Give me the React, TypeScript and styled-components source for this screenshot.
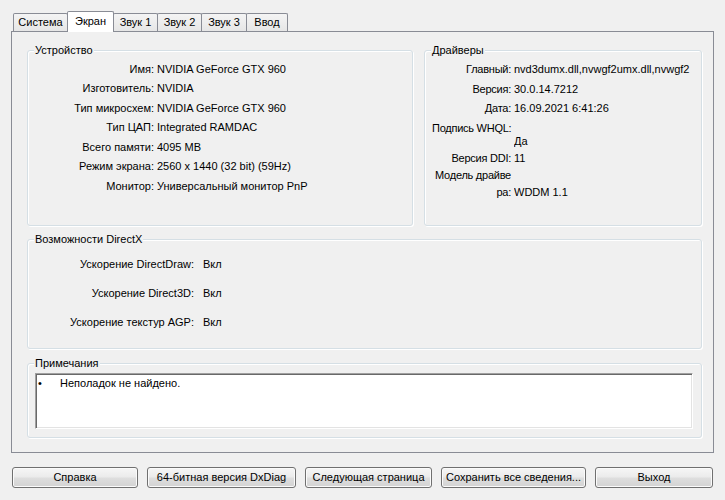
import { Fragment } from "react";
import styled, { createGlobalStyle } from "styled-components";

const GlobalStyle = createGlobalStyle`
  html, body {
    margin: 0;
    padding: 0;
    background: #f0f0f0;
  }
  body {
    font-family: "Liberation Sans", Arial, sans-serif;
    font-size: 11px;
    color: #000;
  }
`;

const Window = styled.div`
  width: 725px;
  height: 500px;
  box-sizing: border-box;
  padding: 11px 11px 0 11px;
  background: #f0f0f0;
`;

const TabStrip = styled.div`
  position: relative;
  z-index: 2;
  display: flex;
  align-items: flex-end;
  height: 20px;
  padding-left: 2px;
`;

const Tab = styled.div<{ $active?: boolean; $w: number }>`
  position: relative;
  z-index: ${(p) => (p.$active ? 2 : 1)};
  box-sizing: border-box;
  width: ${(p) => p.$w}px;
  height: ${(p) => (p.$active ? 21 : 18)}px;
  margin-bottom: ${(p) => (p.$active ? -1 : 0)}px;
  border: 1px solid #898c95;
  border-bottom: none;
  border-radius: 2px 2px 0 0;
  background: ${(p) =>
    p.$active ? "#ffffff" : "linear-gradient(#f4f4f4, #e6e6e6)"};
  display: flex;
  align-items: center;
  justify-content: center;
  padding-bottom: ${(p) => (p.$active ? 2 : 0)}px;
  line-height: 13px;
  white-space: nowrap;

  & + & {
    margin-left: -1px;
  }
`;

const Panel = styled.div`
  position: relative;
  z-index: 1;
  box-sizing: border-box;
  height: 422px;
  border: 1px solid #898c95;
  padding: 18px 11px 14px 15px;
  display: flex;
  flex-direction: column;
`;

const TopRow = styled.div`
  display: grid;
  grid-template-columns: 386px 1fr;
  column-gap: 11px;
  height: 176px;
`;

const GroupBox = styled.section<{ $h?: number; $mt?: number }>`
  position: relative;
  box-sizing: border-box;
  height: ${(p) => (p.$h ? `${p.$h}px` : "100%")};
  margin-top: ${(p) => p.$mt ?? 0}px;
  border: 1px solid #d5dfe5;
  border-radius: 3px;
  box-shadow: inset 1px 1px 0 #ffffff, 1px 1px 0 #ffffff;
`;

const GroupTitle = styled.div`
  position: absolute;
  top: -7px;
  left: 6px;
  padding: 0 1px;
  background: #f0f0f0;
  line-height: 13px;
  white-space: nowrap;
`;

const DeviceGrid = styled.div`
  display: grid;
  grid-template-columns: 126px 1fr;
  column-gap: 3px;
  padding-top: 8.5px;
  line-height: 19.5px;
`;

const Label = styled.div`
  text-align: right;
  white-space: nowrap;
`;

const Value = styled.div`
  white-space: nowrap;
  overflow: hidden;
`;

const DriverList = styled.div`
  padding: 12px 0 0 7px;
  line-height: 13px;
`;

const DriverRow = styled.div<{ $mt: number; $lh?: number }>`
  display: grid;
  grid-template-columns: 79px 1fr;
  column-gap: 3px;
  align-items: end;
  margin-top: ${(p) => p.$mt}px;
  line-height: ${(p) => p.$lh ?? 13}px;
  padding-right: 6px;
`;

const DriverLabel = styled.div`
  text-align: right;
  white-space: nowrap;
  letter-spacing: -0.25px;
`;

const DirectXGrid = styled.div`
  display: grid;
  grid-template-columns: 166px 1fr;
  column-gap: 9px;
  padding-top: 10px;
  line-height: 29px;
`;

const NotesBox = styled.div`
  box-sizing: border-box;
  height: 56px;
  margin: 9px 8px 0 7px;
  background: #ffffff;
  border: 1px solid;
  border-color: #a0a0a0 #ffffff #ffffff #a0a0a0;
  box-shadow: inset 1px 1px 0 #696969, inset -1px -1px 0 #e3e3e3;
  padding: 2.5px 0 0 2px;
  line-height: 13px;
`;

const NoteLine = styled.div`
  display: grid;
  grid-template-columns: 22px 1fr;
`;

const ButtonRow = styled.div`
  display: flex;
  justify-content: space-between;
  margin-top: 14px;
  padding: 0 1px;
`;

const Button = styled.button<{ $w: number }>`
  box-sizing: border-box;
  width: ${(p) => p.$w}px;
  height: 21px;
  padding: 0;
  border: 1px solid #707070;
  border-radius: 3px;
  background: linear-gradient(
    to bottom,
    #f6f6f6 0%,
    #ebebeb 48%,
    #dedede 52%,
    #d3d3d3 100%
  );
  box-shadow: inset 0 0 0 1px #fbfbfb;
  font: inherit;
  line-height: 13px;
  color: #000;
  white-space: nowrap;
`;

const tabs = [
  { name: "Система", w: 55 },
  { name: "Экран", w: 47, active: true },
  { name: "Звук 1", w: 45 },
  { name: "Звук 2", w: 45 },
  { name: "Звук 3", w: 46 },
  { name: "Ввод", w: 42 },
];

const device = [
  ["Имя:", "NVIDIA GeForce GTX 960"],
  ["Изготовитель:", "NVIDIA"],
  ["Тип микросхем:", "NVIDIA GeForce GTX 960"],
  ["Тип ЦАП:", "Integrated RAMDAC"],
  ["Всего памяти:", "4095 MB"],
  ["Режим экрана:", "2560 x 1440 (32 bit) (59Hz)"],
  ["Монитор:", "Универсальный монитор PnP"],
];

const directx = [
  ["Ускорение DirectDraw:", "Вкл"],
  ["Ускорение Direct3D:", "Вкл"],
  ["Ускорение текстур AGP:", "Вкл"],
];

const buttons = [
  { text: "Справка", w: 126 },
  { text: "64-битная версия DxDiag", w: 149 },
  { text: "Следующая страница", w: 127 },
  { text: "Сохранить все сведения...", w: 145 },
  { text: "Выход", w: 118 },
];

export default function App() {
  return (
    <>
      <GlobalStyle />
      <Window>
        <TabStrip>
          {tabs.map((t) => (
            <Tab key={t.name} $w={t.w} $active={t.active}>
              {t.name}
            </Tab>
          ))}
        </TabStrip>
        <Panel>
          <TopRow>
            <GroupBox>
              <GroupTitle>Устройство</GroupTitle>
              <DeviceGrid>
                {device.map(([label, value]) => (
                  <Fragment key={label}>
                    <Label>{label}</Label>
                    <Value>{value}</Value>
                  </Fragment>
                ))}
              </DeviceGrid>
            </GroupBox>
            <GroupBox>
              <GroupTitle>Драйверы</GroupTitle>
              <DriverList>
                <DriverRow $mt={0}>
                  <DriverLabel>Главный:</DriverLabel>
                  <Value>nvd3dumx.dll,nvwgf2umx.dll,nvwgf2</Value>
                </DriverRow>
                <DriverRow $mt={7}>
                  <DriverLabel>Версия:</DriverLabel>
                  <Value>30.0.14.7212</Value>
                </DriverRow>
                <DriverRow $mt={6}>
                  <DriverLabel>Дата:</DriverLabel>
                  <Value>16.09.2021 6:41:26</Value>
                </DriverRow>
                <DriverRow $mt={6.5}>
                  <DriverLabel>Подпись WHQL:</DriverLabel>
                  <Value />
                </DriverRow>
                <DriverRow $mt={0.5}>
                  <DriverLabel />
                  <Value>Да</Value>
                </DriverRow>
                <DriverRow $mt={4}>
                  <DriverLabel>Версия DDI:</DriverLabel>
                  <Value>11</Value>
                </DriverRow>
                <DriverRow $mt={2} $lh={17.4}>
                  <DriverLabel>
                    Модель драйве
                    <br />
                    ра:
                  </DriverLabel>
                  <Value>WDDM 1.1</Value>
                </DriverRow>
              </DriverList>
            </GroupBox>
          </TopRow>

          <GroupBox $h={110} $mt={13}>
            <GroupTitle>Возможности DirectX</GroupTitle>
            <DirectXGrid>
              {directx.map(([label, value]) => (
                <Fragment key={label}>
                  <Label>{label}</Label>
                  <Value>{value}</Value>
                </Fragment>
              ))}
            </DirectXGrid>
          </GroupBox>

          <GroupBox $h={75} $mt={14}>
            <GroupTitle>Примечания</GroupTitle>
            <NotesBox>
              <NoteLine>
                <span>•</span>
                <span>Неполадок не найдено.</span>
              </NoteLine>
            </NotesBox>
          </GroupBox>
        </Panel>
        <ButtonRow>
          {buttons.map((b) => (
            <Button key={b.text} $w={b.w}>
              {b.text}
            </Button>
          ))}
        </ButtonRow>
      </Window>
    </>
  );
}
